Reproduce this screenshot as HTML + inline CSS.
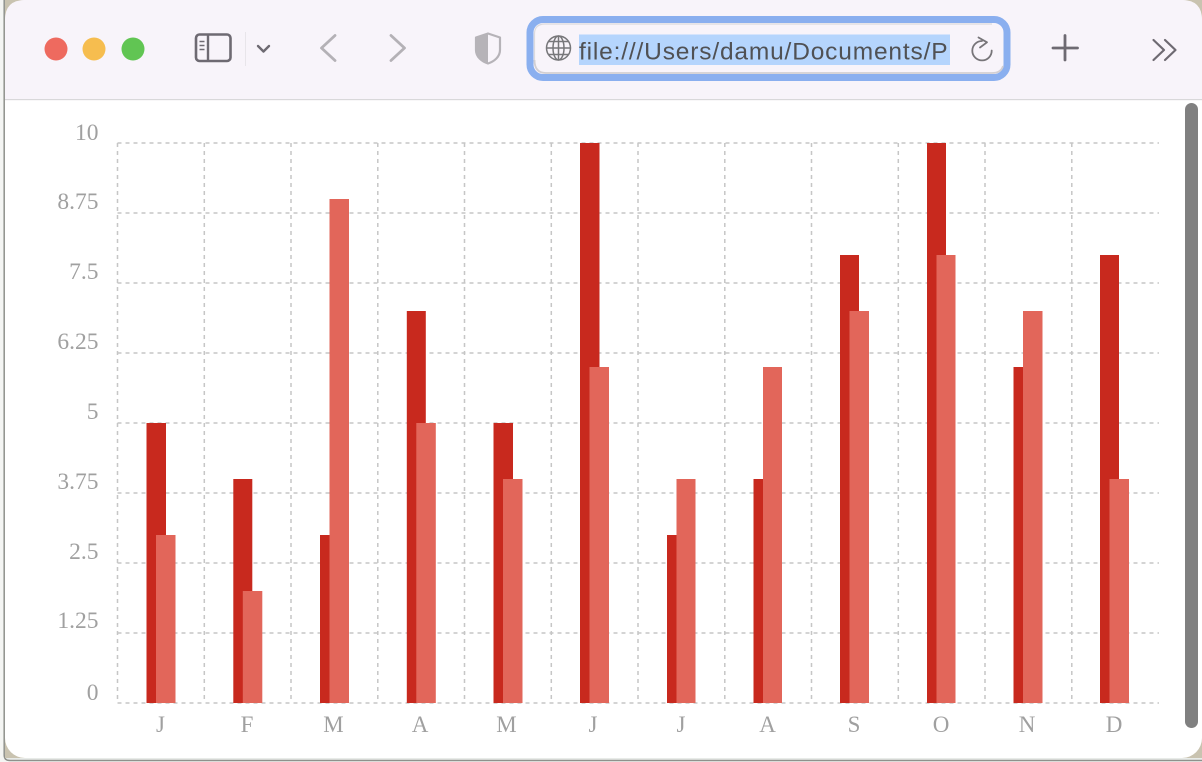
<!DOCTYPE html>
<html><head><meta charset="utf-8"><style>
html,body{margin:0;padding:0;width:1202px;height:762px;overflow:hidden;background:#f4f5f3}
svg{display:block}
</style></head><body>
<svg width="1202" height="762" viewBox="0 0 1202 762" xmlns="http://www.w3.org/2000/svg">
<rect x="0" y="0" width="1202" height="762" fill="#f4f5f3"/>
<path d="M4.200 0V755Q4.200 760.500 10 760.500H1202" fill="none" stroke="#8f918c" stroke-width="1.500"/>
<path d="M5 0H1202V759.500H9Q5 759.500 5 755Z" fill="#e8ebe8"/>
<path d="M5 0H30V25H5ZM1177 0H1202V25H1177ZM5 733H30V758H5ZM1177 733H1202V758H1177Z" fill="#c9c3b0"/>
<rect x="5" y="0" width="1197" height="758" rx="20" fill="#fff"/>
<path d="M5 100V20Q5 0 25 0H1182Q1202 0 1202 20V100Z" fill="#f8f4fa"/>
<rect x="5" y="99" width="1197" height="1.200" fill="#d9d8da"/>
<circle cx="56" cy="49" r="11.500" fill="#ee6a5f"/>
<circle cx="94" cy="49" r="11.500" fill="#f6bd4f"/>
<circle cx="133" cy="49" r="11.500" fill="#61c553"/>
<rect x="196" y="34.500" width="34.500" height="26.500" rx="3.500" fill="none" stroke="#6e6a72" stroke-width="2.600"/>
<path d="M208 35V61" stroke="#6e6a72" stroke-width="2.400"/>
<path d="M199.500 41.500h5M199.500 45.500h5M199.500 49.500h5" stroke="#6e6a72" stroke-width="1.500"/>
<rect x="245" y="32" width="1" height="34" fill="#e8e5ea"/>
<path d="M258 46l5.500 5.500L269 46" fill="none" stroke="#6e6a72" stroke-width="2.400" stroke-linecap="round" stroke-linejoin="round"/>
<path d="M335 35.500L321.500 48L335 60.500" fill="none" stroke="#b4b1b6" stroke-width="2.800" stroke-linecap="round" stroke-linejoin="round"/>
<path d="M391 35.500L404.500 48L391 60.500" fill="none" stroke="#b4b1b6" stroke-width="2.800" stroke-linecap="round" stroke-linejoin="round"/>
<path d="M488 33.500L500 37.500V50C500 57 494 61.500 488 63.500C482 61.500 476 57 476 50V37.500Z" fill="#f8f4fa" stroke="#b6b3b8" stroke-width="2.200" stroke-linejoin="round"/>
<path d="M488 33.500L476 37.500V50C476 57 482 61.500 488 63.500Z" fill="#b6b3b8"/>
<rect x="530" y="19.500" width="477" height="58" rx="13" fill="#f8f4fa" stroke="#8aafef" stroke-width="7"/>
<path d="M534.500 62V34Q534.500 24 545 24H992" fill="none" stroke="#dcdadd" stroke-width="1.200"/>
<path d="M534.500 60Q534.500 73 546 73H992Q1001 73 1003 66" fill="none" stroke="#d2cfd2" stroke-width="1.800"/>
<g fill="none" stroke="#77777a" stroke-width="1.500">
<circle cx="558.500" cy="48" r="12"/>
<ellipse cx="558.500" cy="48" rx="5.500" ry="12"/>
<path d="M558.500 36V60M546.500 48H570.500M548.500 41.500H568.500M548.500 54.500H568.500"/>
</g>
<rect x="579" y="34.500" width="371" height="30.500" fill="#b5d5fd"/>
<svg x="579" y="30" width="371" height="40" viewBox="0 0 371 40">
<text x="0" y="29.500" font-family="'Liberation Sans',sans-serif" font-size="24.500" letter-spacing="0.830" fill="#505154">file:///Users/damu/Documents/Projects</text>
</svg>
<path d="M982 41A9.700 9.700 0 1 0 991.700 50.500" fill="none" stroke="#777579" stroke-width="1.800" stroke-linecap="round"/>
<path d="M978.500 37.500L987 42.300L980 47.500" fill="none" stroke="#777579" stroke-width="1.800" stroke-linecap="round" stroke-linejoin="round"/>
<path d="M1065 35.500V60M1053 48H1077.500" stroke="#6e6a72" stroke-width="2.800" stroke-linecap="round"/>
<path d="M1153.500 40L1164 50L1153.500 60M1165 40L1175.500 50L1165 60" fill="none" stroke="#6e6a72" stroke-width="2.200" stroke-linecap="round" stroke-linejoin="round"/>
<rect x="1185" y="103" width="13" height="625" rx="6.500" fill="#808080"/>
<g stroke="#c6c6c6" stroke-width="1.500" stroke-dasharray="4 4" fill="none">
<path d="M117.500 143H1159M117.500 213H1159M117.500 283H1159M117.500 353H1159M117.500 423H1159M117.500 493H1159M117.500 563H1159M117.500 633H1159M117.500 703H1159"/>
<path d="M117.500 143V703M204.300 143V703M291 143V703M377.800 143V703M464.500 143V703M551.300 143V703M638 143V703M724.800 143V703M811.500 143V703M898.300 143V703M985 143V703M1071.800 143V703"/>
</g>
<g fill="#c8291e">
<rect x="146.500" y="423" width="19.500" height="280"/>
<rect x="233.300" y="479" width="19" height="224"/>
<rect x="320" y="535" width="19.500" height="168"/>
<rect x="406.800" y="311" width="19" height="392"/>
<rect x="493.500" y="423" width="19.500" height="280"/>
<rect x="580" y="143" width="19.500" height="560"/>
<rect x="667" y="535" width="19" height="168"/>
<rect x="753.500" y="479" width="19" height="224"/>
<rect x="840" y="255" width="19" height="448"/>
<rect x="927" y="143" width="19" height="560"/>
<rect x="1013.500" y="367" width="19" height="336"/>
<rect x="1100" y="255" width="19" height="448"/>
</g>
<g fill="#e2665a">
<rect x="156" y="535" width="19.500" height="168"/>
<rect x="242.800" y="591" width="19.500" height="112"/>
<rect x="329.500" y="199" width="19.500" height="504"/>
<rect x="416.300" y="423" width="19.500" height="280"/>
<rect x="503" y="479" width="19.500" height="224"/>
<rect x="589.500" y="367" width="19.500" height="336"/>
<rect x="676.500" y="479" width="19" height="224"/>
<rect x="763" y="367" width="19" height="336"/>
<rect x="849.500" y="311" width="19.500" height="392"/>
<rect x="936.500" y="255" width="19" height="448"/>
<rect x="1023" y="311" width="19.500" height="392"/>
<rect x="1109.500" y="479" width="19.500" height="224"/>
</g>
<g font-family="'Liberation Serif',serif" font-size="23.500" fill="#a0a0a0" text-anchor="end">
<text x="98.500" y="140">10</text>
<text x="98.500" y="209">8.75</text>
<text x="98.500" y="279">7.5</text>
<text x="98.500" y="349">6.25</text>
<text x="98.500" y="419">5</text>
<text x="98.500" y="489">3.75</text>
<text x="98.500" y="559">2.5</text>
<text x="98.500" y="628">1.25</text>
<text x="98.500" y="700">0</text>
</g>
<g font-family="'Liberation Serif',serif" font-size="23" fill="#a0a0a0" text-anchor="middle">
<text x="160.500" y="732">J</text>
<text x="247" y="732">F</text>
<text x="333.500" y="732">M</text>
<text x="420" y="732">A</text>
<text x="506.500" y="732">M</text>
<text x="593" y="732">J</text>
<text x="681" y="732">J</text>
<text x="767.500" y="732">A</text>
<text x="854" y="732">S</text>
<text x="941" y="732">O</text>
<text x="1027" y="732">N</text>
<text x="1114" y="732">D</text>
</g>
</svg>
</body></html>
